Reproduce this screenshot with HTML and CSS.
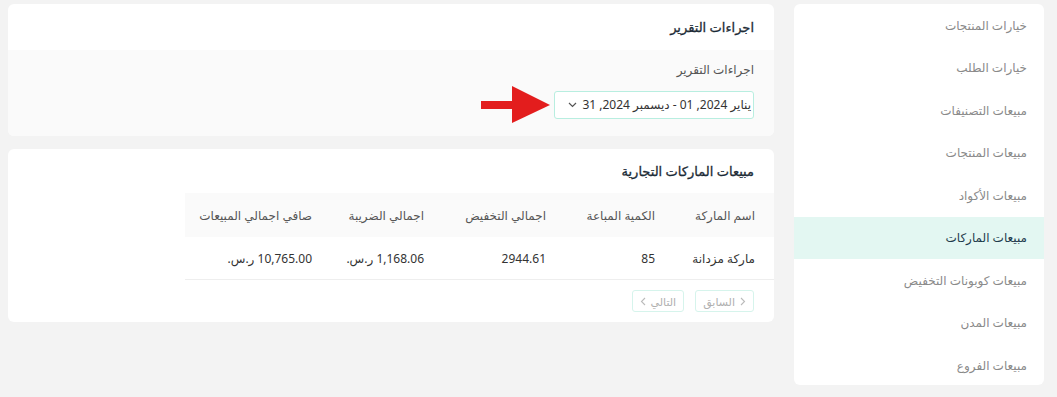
FILE: index.html
```html
<!DOCTYPE html>
<html lang="ar" dir="rtl">
<head>
  <meta charset="UTF-8">
  <title>مبيعات الماركات</title>
  <link rel="stylesheet" href="styles.css">
</head>
<body>
  <div class="layout">
    <aside class="side-menu">
      <a class="menu-item">خيارات المنتجات</a>
      <a class="menu-item">خيارات الطلب</a>
      <a class="menu-item">مبيعات التصنيفات</a>
      <a class="menu-item">مبيعات المنتجات</a>
      <a class="menu-item">مبيعات الأكواد</a>
      <a class="menu-item active">مبيعات الماركات</a>
      <a class="menu-item">مبيعات كوبونات التخفيض</a>
      <a class="menu-item">مبيعات المدن</a>
      <a class="menu-item">مبيعات الفروع</a>
    </aside>

    <main class="content">
      <section class="card">
        <div class="card-header">اجراءات التقرير</div>
        <div class="card-body filters">
          <label class="field-label">اجراءات التقرير</label>
          <div class="date-row">
            <button class="date-picker">
              <span>يناير 2024, 01 - ديسمبر 2024, 31</span>
              <svg class="chev" width="9" height="6" viewBox="0 0 9 6"><path d="M1 1l3.5 3.5L8 1" fill="none" stroke="#555" stroke-width="1.2"/></svg>
            </button>
            <svg class="pointer-arrow" width="70" height="38" viewBox="0 0 70 38">
              <rect x="0" y="15" width="34" height="8" fill="#e31d1d"/>
              <polygon points="31,0 69,19 31,37" fill="#e31d1d"/>
            </svg>
          </div>
        </div>
      </section>

      <section class="card">
        <div class="card-header compact">مبيعات الماركات التجارية</div>
        <div class="table-wrap">
          <table class="report-table">
            <thead>
              <tr>
                <th class="c1">اسم المارکة</th>
                <th class="c2">الكمية المباعة</th>
                <th class="c3">اجمالي التخفيض</th>
                <th class="c4">اجمالي الضريبة</th>
                <th class="c5">صافي اجمالي المبيعات</th>
              </tr>
            </thead>
            <tbody>
              <tr>
                <td>ماركة مزدانة</td>
                <td>85</td>
                <td>2944.61</td>
                <td>1,168.06 ر.س.</td>
                <td>10,765.00 ر.س.</td>
              </tr>
            </tbody>
          </table>
        </div>
        <div class="pager">
          <button class="page-btn" disabled>
            <svg width="6" height="9" viewBox="0 0 6 9"><path d="M1 1l3.5 3.5L1 8" fill="none" stroke="#bbb" stroke-width="1.1"/></svg>
            <span>السابق</span>
          </button>
          <button class="page-btn" disabled>
            <span>التالي</span>
            <svg width="6" height="9" viewBox="0 0 6 9"><path d="M5 1L1.5 4.5 5 8" fill="none" stroke="#bbb" stroke-width="1.1"/></svg>
          </button>
        </div>
      </section>
    </main>
  </div>
</body>
</html>
```

FILE: styles.css
```css
body {
  margin: 0;
  padding: 4px 13px 0 8px;
  background: #f3f3f3;
  font-family: "Noto Sans", "DejaVu Sans", sans-serif;
  color: #333;
  height: 393px;
  overflow: hidden;
}

.layout {
  display: flex;
  gap: 20px;
  align-items: flex-start;
}

.side-menu {
  width: 250px;
  flex-shrink: 0;
  background: #fff;
  border-radius: 6px;
  display: flex;
  flex-direction: column;
  overflow: hidden;
  height: 381px;
}

.menu-item {
  height: 42.5px;
  display: flex;
  align-items: center;
  padding: 0 17px;
  font-size: 12px;
  color: #8a8a8a;
  flex-shrink: 0;
}

.menu-item.active {
  background: #e3f7f2;
  color: #1f3b4d;
}

.content {
  flex: 1;
  display: flex;
  flex-direction: column;
  gap: 13px;
}

.card {
  background: #fff;
  border-radius: 6px;
  overflow: hidden;
}

.card-header {
  height: 46px;
  display: flex;
  align-items: center;
  padding: 0 20px;
  font-size: 13px;
  color: #1c2b36;
  -webkit-text-stroke: 0.3px #1c2b36;
}

.card-header.compact {
  height: 44px;
}

.filters {
  background: #fafafa;
  padding: 11px 20px 20px;
  height: 55px;
}

.field-label {
  display: block;
  font-size: 12px;
  color: #555;
  line-height: 18px;
}

.date-row {
  display: flex;
  align-items: center;
  margin-top: 6px;
  gap: 3px;
}

.date-picker {
  width: 200px;
  height: 28px;
  border: 1px solid #b8eee0;
  border-radius: 3px;
  background: #fff;
  display: flex;
  align-items: center;
  justify-content: space-between;
  padding: 0 2px 0 13px;
  font-family: inherit;
  font-size: 12px;
  color: #333;
  white-space: nowrap;
  direction: rtl;
}

.pointer-arrow {
  margin-top: 1px;
}

.table-wrap {
  padding-left: 177px;
}

.report-table {
  width: 100%;
  border-collapse: collapse;
  font-size: 12px;
}

.report-table th {
  background: #fafafa;
  height: 44px;
  text-align: right;
  font-weight: normal;
  color: #555;
  padding: 0 19px 0 0;
}

.report-table td {
  height: 42px;
  text-align: right;
  padding: 0 19px 0 0;
  border-bottom: 1px solid #eee;
  color: #333;
}

.report-table .c1 { width: 81px; }
.report-table .c2 { width: 90px; }
.report-table .c3 { width: 103px; }
.report-table .c4 { width: 93px; }

.pager {
  display: flex;
  gap: 11px;
  padding: 10px 20px 10px;
}

.page-btn {
  height: 22px;
  display: flex;
  align-items: center;
  gap: 5px;
  padding: 0 7px;
  border: 1px solid #d6f4ec;
  border-radius: 3px;
  background: #fff;
  font-family: inherit;
  font-size: 11px;
  color: #b0b0b0;
}
```
